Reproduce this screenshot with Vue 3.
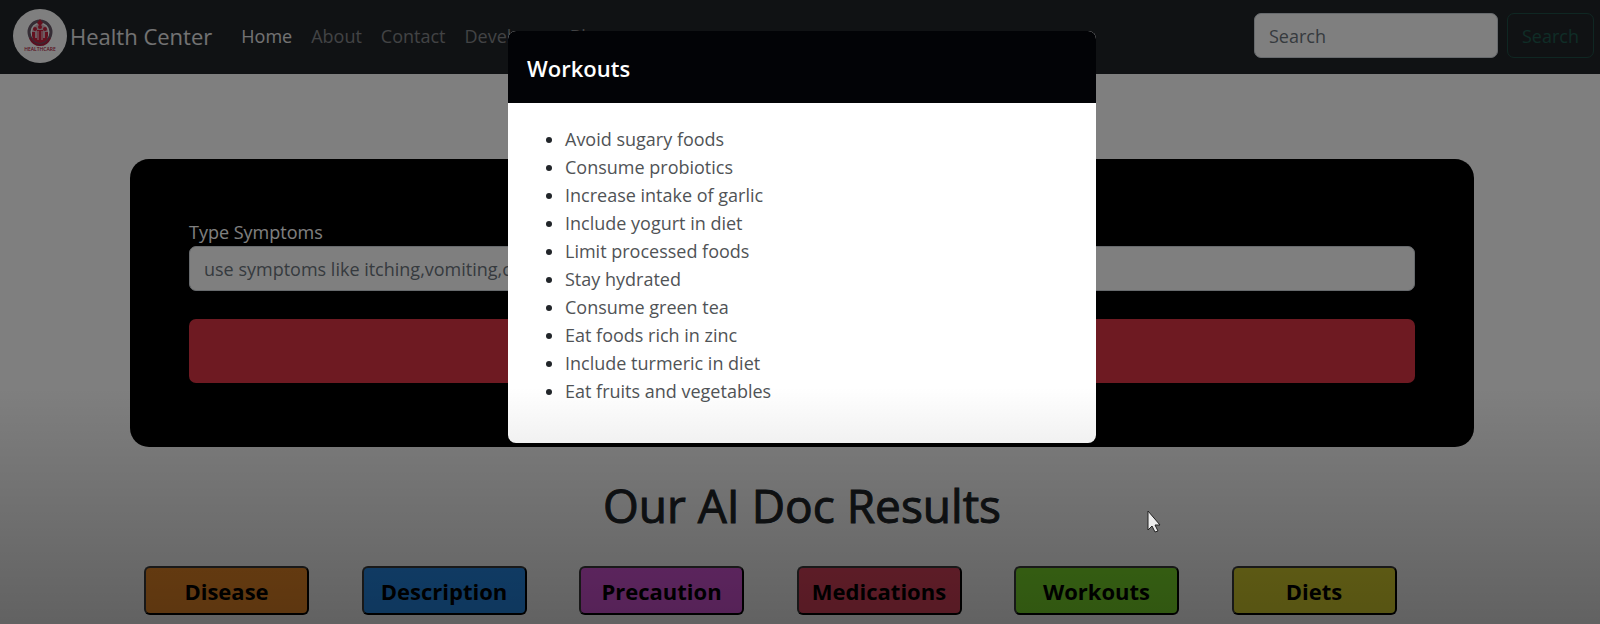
<script setup>
import { ref } from 'vue'

const links = ['Home', 'About', 'Contact', 'Developer', 'Blog']
const workouts = [
  'Avoid sugary foods',
  'Consume probiotics',
  'Increase intake of garlic',
  'Include yogurt in diet',
  'Limit processed foods',
  'Stay hydrated',
  'Consume green tea',
  'Eat foods rich in zinc',
  'Include turmeric in diet',
  'Eat fruits and vegetables',
]
const results = ['Disease', 'Description', 'Precaution', 'Medications', 'Workouts', 'Diets']
const query = ref('')
const symptoms = ref('')
</script>

<template>
  <div class="page">
    <nav class="navbar">
      <a class="brand" href="#">
        <svg class="logo" viewBox="0 0 54 54" aria-hidden="true">
          <circle cx="27" cy="27" r="27" fill="#fff" />
          <circle cx="27" cy="23" r="11" fill="none" stroke="#6a5a6a" stroke-width="3" />
          <circle cx="27" cy="23" r="8" fill="#d8b9c2" />
          <path d="M27 10l3 4-3 3-3-3z" fill="#c8233f" />
          <circle cx="27" cy="18" r="2" fill="#c8233f" />
          <circle cx="22" cy="20" r="2" fill="#c8233f" />
          <circle cx="32" cy="20" r="2" fill="#c8233f" />
          <path d="M19 23h3v6h2v-8h6v8h2v-6h3v4q-1 6-8 7-7-1-8-7z" fill="#c8233f" />
          <path d="M25 22v9M29 22v9" stroke="#efdde2" stroke-width="1" />
          <path d="M17 29q3 7 10 7t10-7" fill="none" stroke="#b02040" stroke-width="2" />
          <text x="27" y="42" text-anchor="middle" class="logo-text">HEALTHCARE</text>
        </svg>
        <span>Health Center</span>
      </a>
      <ul class="links">
        <li v-for="(link, i) in links" :key="link">
          <a href="#" :class="{ active: i === 0 }">{{ link }}</a>
        </li>
      </ul>
      <form class="search" role="search" @submit.prevent>
        <input v-model="query" type="search" placeholder="Search" aria-label="Search" />
        <button type="submit">Search</button>
      </form>
    </nav>

    <main>
      <form class="panel" @submit.prevent>
        <label for="symptoms">Type Symptoms</label>
        <input
          id="symptoms"
          v-model="symptoms"
          type="text"
          placeholder="use symptoms like itching,vomiting,cough etc"
        />
        <button type="submit">Predict</button>
      </form>
      <h1>Our AI Doc Results</h1>
      <div class="results">
        <button v-for="name in results" :key="name" type="button" :class="name.toLowerCase()">
          {{ name }}
        </button>
      </div>
    </main>

    <div class="backdrop">
      <section class="modal" role="dialog" aria-modal="true" aria-labelledby="modal-title">
        <header><h2 id="modal-title">Workouts</h2></header>
        <ul>
          <li v-for="item in workouts" :key="item"><span>{{ item }}</span></li>
        </ul>
      </section>
    </div>
    <div class="shade"></div>
    <svg class="cursor" viewBox="0 0 14 24" aria-hidden="true">
      <path d="M1 1v19l4-4 3 6 3-1-3-6h5z" fill="#eee" stroke="#222" stroke-width="1" />
    </svg>
  </div>
</template>

<style>
body {
  margin: 0;
}
</style>

<style scoped>
* {
  box-sizing: border-box;
}
.page {
  position: relative;
  min-height: 100vh;
  background: #fff;
  color: #212529;
  font-family: "Open Sans", "Noto Sans", sans-serif;
  font-size: 18px;
  line-height: 28px;
}
input,
button {
  font: inherit;
}
.navbar {
  display: flex;
  align-items: center;
  height: 74px;
  padding: 0 6px 0 13px;
  background: #212529;
}
.brand {
  display: flex;
  align-items: center;
  gap: 3px;
  margin-right: 29px;
  padding-bottom: 3px;
  color: #e6e6e6;
  font-size: 22px;
  text-decoration: none;
}
.logo {
  width: 54px;
  height: 54px;
}
.logo-text {
  fill: #b02040;
  font-size: 5px;
  font-weight: 600;
}
.links {
  display: flex;
  gap: 19px;
  flex: 1;
  margin: 0;
  padding: 0 0 2px;
  list-style: none;
}
.links a {
  color: #85878a;
  text-decoration: none;
}
.links a.active {
  color: #e6e6e6;
}
.search {
  display: flex;
  gap: 9px;
  padding-bottom: 3px;
}
.search input {
  width: 244px;
}
input {
  height: 45px;
  padding: 0 14px;
  border: 1px solid #ced4da;
  border-radius: 7px;
  background: #fff;
  color: #212529;
}
input::placeholder {
  color: #6c757d;
  opacity: 1;
}
.search button {
  width: 87px;
  padding: 0;
  border: 1px solid #1f4f46;
  border-radius: 7px;
  background: transparent;
  color: #1f5a4e;
}
main {
  margin: 85px 126px 0 130px;
}
.panel {
  display: flex;
  flex-direction: column;
  padding: 59px 59px 64px;
  border-radius: 19px;
  background: #000;
}
.panel label {
  align-self: flex-start;
  color: #fff;
}
.panel button {
  height: 64px;
  margin-top: 28px;
  border: 0;
  border-radius: 7px;
  background: #dc3545;
  color: #fff;
}
h1 {
  margin: 29px 0 32px;
  font-size: 46px;
  font-weight: 500;
  line-height: 58px;
  text-align: center;
  -webkit-text-stroke: 1px #212529;
}
.results {
  display: grid;
  grid-template-columns: repeat(6, 1fr);
  padding: 0 25px 0 14px;
}
.results button {
  width: 165px;
  height: 49px;
  padding: 0;
  border: 2px solid #000;
  border-top-color: #3c3c3c;
  border-left-color: #3c3c3c;
  border-radius: 6px;
  color: #000;
  font-size: 22px;
  font-weight: 700;
}
.results .disease {
  background: #f08c28;
}
.results .description {
  background: #268ff0;
}
.results .precaution {
  background: #dc58e0;
}
.results .medications {
  background: #e0445f;
}
.results .workouts {
  background: #7ee02c;
}
.results .diets {
  background: #e0d830;
}
.backdrop {
  position: absolute;
  inset: 0;
  padding: 31px 0 0 4px;
  background: rgba(0, 0, 0, 0.5);
}
.modal {
  width: 588px;
  margin: 0 auto;
  overflow: hidden;
  border-radius: 8px;
  background: #fff;
}
.modal header {
  padding: 19px 19px 17px;
  background: #020306;
}
.modal h2 {
  margin: 0;
  color: #fff;
  font-size: 22px;
  font-weight: 600;
  line-height: 36px;
}
.modal ul {
  margin: 0;
  padding: 22px 19px 38px 57px;
}
.modal li span {
  color: #505356;
}
.shade {
  position: absolute;
  inset: 62% 0 0;
  background: linear-gradient(rgba(0, 0, 0, 0), rgba(0, 0, 0, 0.23));
  pointer-events: none;
}
.cursor {
  position: absolute;
  top: 510px;
  left: 1147px;
  width: 14px;
  height: 24px;
}
</style>
